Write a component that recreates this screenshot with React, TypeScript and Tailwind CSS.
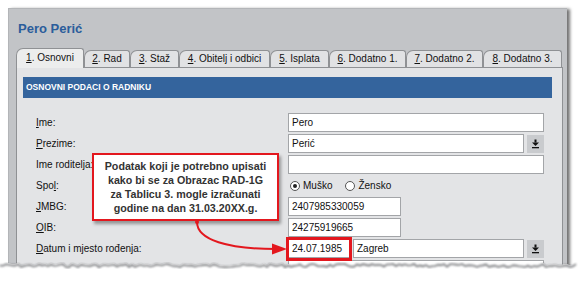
import React from "react";

const tabs = [
  { n: "1", t: ". Osnovni", w: "w-[68px]", active: true },
  { n: "2", t: ". Rad", w: "w-[46px]" },
  { n: "3", t: ". Staž", w: "w-[49px]" },
  { n: "4", t: ". Obitelj i odbici", w: "w-[91px]" },
  { n: "5", t: ". Isplata", w: "w-[59px]" },
  { n: "6", t: ". Dodatno 1.", w: "w-[77px]" },
  { n: "7", t: ". Dodatno 2.", w: "w-[77px]" },
  { n: "8", t: ". Dodatno 3.", w: "w-[79px]" },
];

function DropBtn() {
  return (
    <div className="ml-[3px] w-[17px] h-[18px] bg-[#c9cbce] flex items-center justify-center shrink-0">
      <svg width="9" height="10" viewBox="0 0 9 10">
        <rect x="3.5" y="0.5" width="2" height="3" fill="#111" />
        <polygon points="1,3.5 8,3.5 4.5,7" fill="#111" />
        <rect x="1" y="8" width="7" height="1.3" fill="#111" />
      </svg>
    </div>
  );
}

function Input({ w, value }: { w: string; value?: string }) {
  return (
    <div className={`${w} h-[19px] shrink-0 bg-white border border-[#a3a5a8] flex items-center pl-[3px] text-[10px] text-[#111] leading-none`}>
      {value}
    </div>
  );
}

function Row({ label, children }: { label: React.ReactNode; children: React.ReactNode }) {
  return (
    <div className="flex items-center h-[19px] shrink-0">
      <div className="w-[271px] shrink-0 pl-[19px] text-[10px] text-[#111] leading-none">{label}</div>
      {children}
    </div>
  );
}

function jagged() {
  let d = "M 0 264";
  let seed = 7;
  for (let x = 0; x <= 578; x += 3) {
    seed = (seed * 9301 + 49297) % 233280;
    const r = seed / 233280;
    const y = 262.5 + r * 3.2;
    d += ` L ${x} ${y.toFixed(2)}`;
  }
  return d;
}

export default function App() {
  const edge = jagged();
  return (
    <div className="relative w-[578px] h-[282px] bg-white overflow-hidden pt-[8px] pl-[8px] font-['Liberation_Sans',Arial,sans-serif]">
      <div className="w-[559px] h-[262px] bg-[#c2c4c7] border-l border-t border-[#b3b5b8] shadow-[3px_1px_3px_rgba(0,0,0,0.55)] flex flex-col overflow-hidden">
        <div className="h-[39px] shrink-0 pl-[9px] pt-[12px] text-[13px] font-bold text-[#2b5d9b] leading-[16px]">
          Pero Perić
        </div>
        <div className="flex items-end h-[20px] shrink-0 pl-[7px] relative z-10">
          {tabs.map((tb) =>
            tb.active ? (
              <div
                key={tb.n}
                className={`${tb.w} h-[20px] shrink-0 bg-[#eceded] border-l border-t border-r border-[#8f9194] rounded-tl-[7px] rounded-tr-[3px] flex items-center justify-center text-[10px] text-[#111] leading-none pb-[2px]`}
              >
                <span className="underline">{tb.n}</span>
                {tb.t}
              </div>
            ) : (
              <div
                key={tb.n}
                className={`${tb.w} h-[17px] shrink-0 mb-[1px] bg-[#e1e2e4] border-l border-t border-r border-[#8f9194] rounded-tl-[7px] rounded-tr-[3px] flex items-center justify-center text-[10px] text-[#111] leading-none`}
              >
                <span className="underline">{tb.n}</span>
                {tb.t}
              </div>
            )
          )}
        </div>
        <div className="ml-[7px] -mt-[1px] w-[547px] flex-1 min-h-0 shrink-0 bg-[#e3e4e6] border border-[#8f9194] flex flex-col">
          <div className="mt-[9px] ml-[6px] w-[529px] h-[21px] shrink-0 bg-[#34649d] flex items-center pl-[3px] text-[8.5px] font-bold text-white leading-none">
            OSNOVNI PODACI O RADNIKU
          </div>
          <div className="mt-[15px] flex flex-col gap-[2px] shrink-0">
            <Row label={<><span className="underline">I</span>me:</>}>
              <Input w="w-[256px]" value="Pero" />
            </Row>
            <Row label={<><span className="underline">P</span>rezime:</>}>
              <Input w="w-[236px]" value="Perić" />
              <DropBtn />
            </Row>
            <Row label="Ime roditelja:">
              <Input w="w-[256px]" />
            </Row>
            <Row label={<>Spo<span className="underline">l</span>:</>}>
              <div className="flex items-center text-[10px] text-[#111] leading-none">
                <span className="w-[10px] h-[10px] rounded-full border border-[#555] bg-white flex items-center justify-center ml-[2px]">
                  <span className="w-[4px] h-[4px] rounded-full bg-[#222]" />
                </span>
                <span className="ml-[3px]">Muško</span>
                <span className="w-[10px] h-[10px] rounded-full border border-[#555] bg-white ml-[13px]" />
                <span className="ml-[3px]">Žensko</span>
              </div>
            </Row>
            <Row label={<><span className="underline">J</span>MBG:</>}>
              <Input w="w-[113px]" value="2407985330059" />
            </Row>
            <Row label={<><span className="underline">O</span>IB:</>}>
              <Input w="w-[113px]" value="24275919665" />
            </Row>
            <Row label={<><span className="underline">D</span>atum i mjesto rođenja:</>}>
              <Input w="w-[62px]" value="24.07.1985" />
              <div className="ml-[3px]">
                <Input w="w-[171px]" value="Zagreb" />
              </div>
              <DropBtn />
            </Row>
            <Row label="">
              <Input w="w-[256px]" />
            </Row>
          </div>
        </div>
      </div>

      {/* callout */}
      <div className="absolute left-[92px] top-[153px] w-[187px] h-[68px] bg-white border-2 border-[#e3171e] shadow-[2px_3px_3px_rgba(0,0,0,0.35)] flex flex-col items-center justify-center text-[10.7px] font-bold text-[#333] leading-[14px] text-center">
        <div>Podatak koji je potrebno upisati</div>
        <div>kako bi se za Obrazac RAD-1G</div>
        <div>za Tablicu 3. mogle izračunati</div>
        <div>godine na dan 31.03.20XX.g.</div>
      </div>

      {/* highlight box */}
      <div className="absolute left-[286px] top-[237px] w-[66px] h-[24px] border-[3px] border-[#e3171e]" />

      {/* arrow + torn edge */}
      <svg className="absolute left-0 top-0" width="578" height="282" viewBox="0 0 578 282">
        <defs>
          <filter id="blur1" x="-5%" y="-50%" width="110%" height="200%">
            <feGaussianBlur stdDeviation="0.9" />
          </filter>
        </defs>
        <path d={`${edge} L 578 282 L 0 282 Z`} fill="#ffffff" />
        <path d={edge} transform="translate(0 1.5)" fill="none" stroke="#6f7174" strokeWidth="1.6" filter="url(#blur1)" />
        <path d="M 197 222 C 197 240, 228 249, 276 249" fill="none" stroke="#e3171e" strokeWidth="2" />
        <circle cx="197" cy="222" r="2" fill="#e3171e" />
        <polygon points="272,243.5 287,249 272,254.5" fill="#e3171e" />
      </svg>
    </div>
  );
}
